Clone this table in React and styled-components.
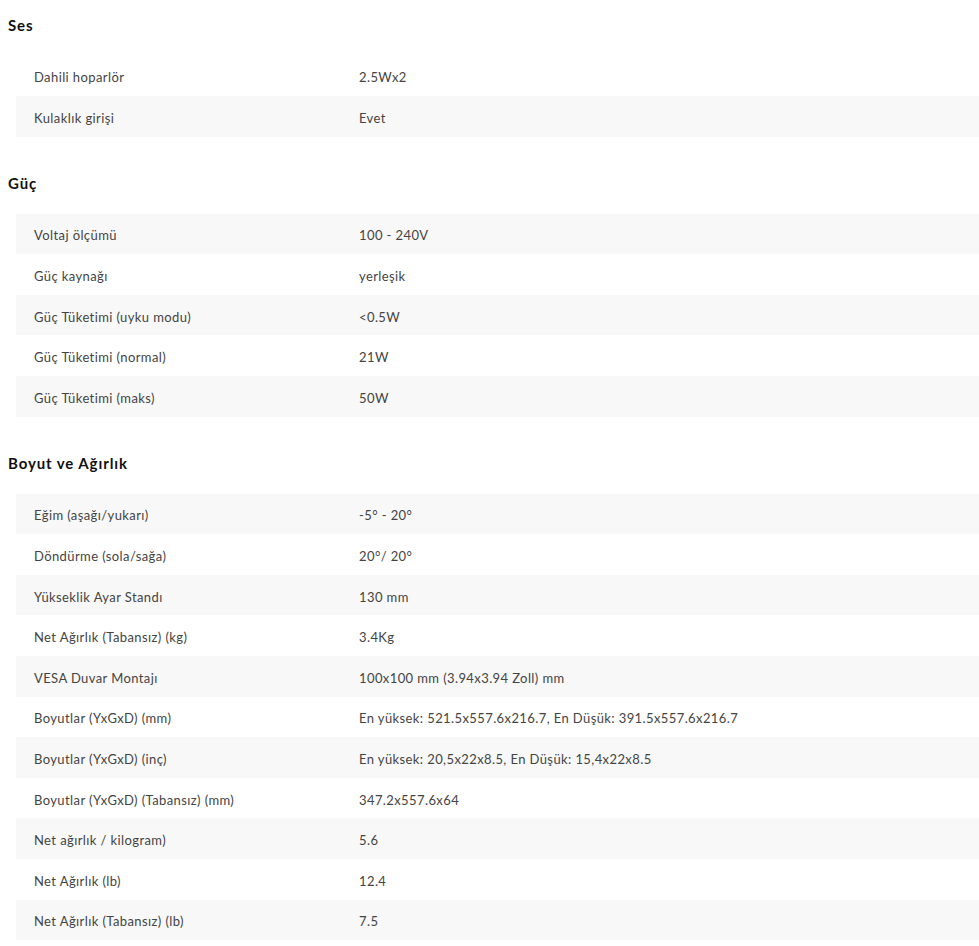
import React from "react";
import styled, { createGlobalStyle } from "styled-components";

const Global = createGlobalStyle`
  html, body { margin: 0; padding: 0; background: #fff; }
  body { font-family: Lato, "Open Sans", sans-serif; overflow: hidden; }
`;

const Page = styled.div`
  padding: 15px 0 0 8px;
  display: flex;
  flex-direction: column;
  gap: 36.5px;
`;

const Section = styled.section`
  display: flex;
  flex-direction: column;
  gap: 20.5px;
`;

const Title = styled.h2`
  margin: 0;
  font-size: 15px;
  line-height: 20px;
  font-weight: 700;
  color: #111;
  letter-spacing: 0.9px;
`;

const Table = styled.div`
  margin-left: 8px;
  display: flex;
  flex-direction: column;
`;

const Row = styled.div`
  display: grid;
  grid-template-columns: 325px 1fr;
  align-items: center;
  box-sizing: border-box;
  height: 40.6px;
  padding: 3px 18px 0;
  background: ${(p) => (p.$striped ? "#f8f8f8" : "#fff")};
  font-size: 13px;
  color: #444;
  letter-spacing: 0.4px;
`;

const Cell = styled.span`
  white-space: nowrap;
`;

const sections = [
  {
    title: "Ses",
    first: false,
    rows: [
      ["Dahili hoparlör", "2.5Wx2"],
      ["Kulaklık girişi", "Evet"],
    ],
  },
  {
    title: "Güç",
    first: true,
    rows: [
      ["Voltaj ölçümü", "100 - 240V"],
      ["Güç kaynağı", "yerleşik"],
      ["Güç Tüketimi (uyku modu)", "<0.5W"],
      ["Güç Tüketimi (normal)", "21W"],
      ["Güç Tüketimi (maks)", "50W"],
    ],
  },
  {
    title: "Boyut ve Ağırlık",
    first: true,
    rows: [
      ["Eğim (aşağı/yukarı)", "-5° - 20°"],
      ["Döndürme (sola/sağa)", "20°/ 20°"],
      ["Yükseklik Ayar Standı", "130 mm"],
      ["Net Ağırlık (Tabansız) (kg)", "3.4Kg"],
      ["VESA Duvar Montajı", "100x100 mm (3.94x3.94 Zoll) mm"],
      ["Boyutlar (YxGxD) (mm)", "En yüksek: 521.5x557.6x216.7, En Düşük: 391.5x557.6x216.7"],
      ["Boyutlar (YxGxD) (inç)", "En yüksek: 20,5x22x8.5, En Düşük: 15,4x22x8.5"],
      ["Boyutlar (YxGxD) (Tabansız) (mm)", "347.2x557.6x64"],
      ["Net ağırlık / kilogram)", "5.6"],
      ["Net Ağırlık (lb)", "12.4"],
      ["Net Ağırlık (Tabansız) (lb)", "7.5"],
    ],
  },
];

export default function App() {
  return (
    <>
      <Global />
      <Page>
        {sections.map((s) => (
          <Section key={s.title}>
            <Title>{s.title}</Title>
            <Table>
              {s.rows.map(([k, v], i) => (
                <Row key={k} $striped={s.first ? i % 2 === 0 : i % 2 === 1}>
                  <Cell>{k}</Cell>
                  <Cell>{v}</Cell>
                </Row>
              ))}
            </Table>
          </Section>
        ))}
      </Page>
    </>
  );
}
